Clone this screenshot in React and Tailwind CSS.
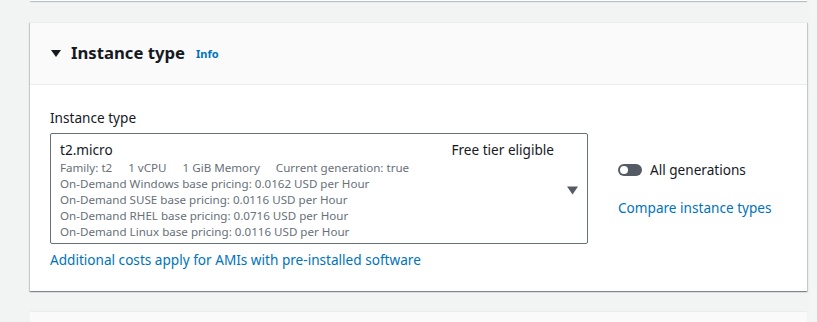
const PRICING = [
  'On-Demand Windows base pricing: 0.0162 USD per Hour',
  'On-Demand SUSE base pricing: 0.0116 USD per Hour',
  'On-Demand RHEL base pricing: 0.0716 USD per Hour',
  'On-Demand Linux base pricing: 0.0116 USD per Hour',
];

export default function App() {
  return (
    <div className="h-[322px] w-[817px] overflow-hidden bg-[#f2f3f3] font-['Noto_Sans','Open_Sans',sans-serif] text-[#16191f]">
      <div className="flex h-full">
        <div className="flex w-[807px] flex-col pl-[30px]">
          {/* tail of the card above */}
          <div className="h-[2px] bg-white shadow-[0_1px_1px_rgba(0,28,36,0.3)]" />

          {/* instance type card */}
          <div className="mt-[21px] border-t border-[#eaeded] bg-white shadow-[0_1px_1px_rgba(0,28,36,0.3),1px_1px_1px_rgba(0,28,36,0.15),-1px_1px_1px_rgba(0,28,36,0.15)]">
            <div className="flex h-[62px] items-center border-b border-[#eaeded] bg-[#fafafa] pl-[20px]">
              <svg width="12" height="12" viewBox="0 0 12 12">
                <path d="M1 3h10L6 10z" fill="#16191f" />
              </svg>
              <span className="ml-[9px] text-[16.7px] font-bold leading-none">Instance type</span>
              <span className="ml-[11px] mt-[2px] text-[11px] font-bold text-[#0073bb]">Info</span>
            </div>

            <div className="px-[20px] pt-[22px] pb-[21px]">
              <div className="text-[13.6px] leading-[22px]">Instance type</div>
              <div className="mt-[4px] flex">
                <div className="flex w-[538px] rounded-[2px] border border-[#687078] pl-[9px] pt-[6px] pb-[3px]">
                  <div className="flex-1">
                    <div className="flex justify-between text-[13.6px] leading-[20px]">
                      <span>t2.micro</span>
                      <span className="mr-[1px]">Free tier eligible</span>
                    </div>
                    <div className="text-[11.6px] leading-[16px] text-[#687078]">
                      <div className="flex gap-[16px]">
                        <span>Family: t2</span>
                        <span>1 vCPU</span>
                        <span>1 GiB Memory</span>
                        <span>Current generation: true</span>
                      </div>
                      {PRICING.map((line) => (
                        <div key={line}>{line}</div>
                      ))}
                    </div>
                  </div>
                  <div className="flex w-[32px] items-center pl-[12px] pt-[2px]">
                    <svg width="11" height="9" viewBox="0 0 11 9">
                      <path d="M0 0.5h11L5.5 8.5z" fill="#545b64" />
                    </svg>
                  </div>
                </div>

                <div className="ml-[30px] flex flex-col pt-[27px]">
                  <div className="flex items-center gap-[8px]">
                    <span className="relative h-[12px] w-[24px] rounded-full bg-[#545b64]">
                      <span className="absolute left-[2px] top-[2px] h-[8px] w-[8px] rounded-full bg-white" />
                    </span>
                    <span className="text-[13.6px] leading-[20px]">All generations</span>
                  </div>
                  <span className="mt-[18px] text-[13.6px] leading-[20px] text-[#0073bb]">
                    Compare instance types
                  </span>
                </div>
              </div>
              <div className="mt-[6px] text-[13.6px] leading-[20px] text-[#0073bb]">
                Additional costs apply for AMIs with pre-installed software
              </div>
            </div>
          </div>

          {/* next card */}
          <div className="mt-[20px] h-[40px] border-t border-[#eaeded] bg-[#fafafa]" />
        </div>
        <div className="ml-[3px] w-[7px] bg-[#f4f5f5]" />
      </div>
    </div>
  );
}
